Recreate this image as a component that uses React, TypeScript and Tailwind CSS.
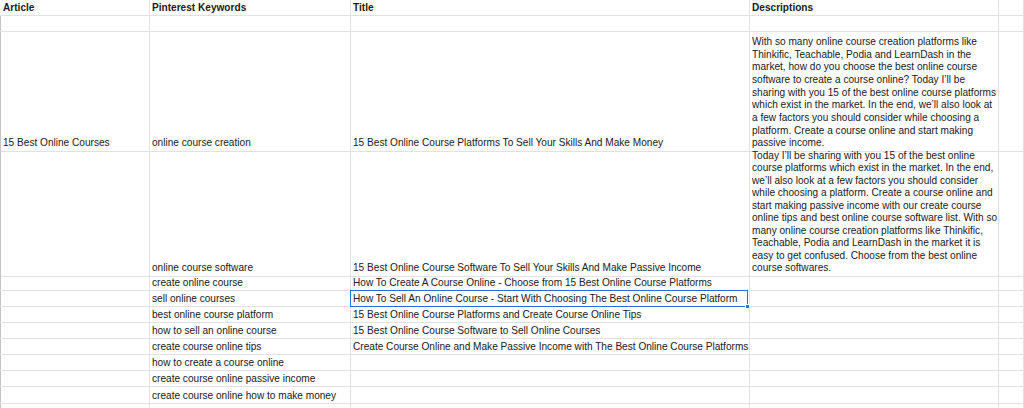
const DESC_ONE = [
  'With so many online course creation platforms like',
  'Thinkific, Teachable, Podia and LearnDash in the',
  'market, how do you choose the best online course',
  'software to create a course online? Today I’ll be',
  'sharing with you 15 of the best online course platforms',
  'which exist in the market. In the end, we’ll also look at',
  'a few factors you should consider while choosing a',
  'platform. Create a course online and start making',
  'passive income.',
];

const DESC_TWO = [
  'Today I’ll be sharing with you 15 of the best online',
  'course platforms which exist in the market. In the end,',
  'we’ll also look at a few factors you should consider',
  'while choosing a platform. Create a course online and',
  'start making passive income with our create course',
  'online tips and best online course software list. With so',
  'many online course creation platforms like Thinkific,',
  'Teachable, Podia and LearnDash in the market it is',
  'easy to get confused. Choose from the best online',
  'course softwares.',
];

type Row = {
  article?: string;
  keyword?: string;
  title?: string;
  desc?: string[];
  descClass?: string;
  height: string;
  selected?: boolean;
};

const ROWS: Row[] = [
  { height: 'h-[16px]' },
  {
    article: '15 Best Online Courses',
    keyword: 'online course creation',
    title: '15 Best Online Course Platforms To Sell Your Skills And Make Money',
    desc: DESC_ONE,
    descClass: 'pt-[4px] leading-[12.65px]',
    height: 'h-[115px]',
  },
  {
    keyword: 'online course software',
    title: '15 Best Online Course Software To Sell Your Skills And Make Passive Income',
    desc: DESC_TWO,
    descClass: 'pt-[3px] leading-[12.45px]',
    height: 'h-[128px]',
  },
  {
    keyword: 'create online course',
    title: 'How To Create A Course Online - Choose from 15 Best Online Course Platforms',
    height: 'h-[16px]',
  },
  {
    keyword: 'sell online courses',
    title: 'How To Sell An Online Course - Start With Choosing The Best Online Course Platform',
    height: 'h-[16px]',
    selected: true,
  },
  {
    keyword: 'best online course platform',
    title: '15 Best Online Course Platforms and Create Course Online Tips',
    height: 'h-[16px]',
  },
  {
    keyword: 'how to sell an online course',
    title: '15 Best Online Course Software to Sell Online Courses',
    height: 'h-[16px]',
  },
  {
    keyword: 'create course online tips',
    title: 'Create Course Online and Make Passive Income with The Best Online Course Platforms',
    height: 'h-[16px]',
  },
  { keyword: 'how to create a course online', height: 'h-[16px]' },
  { keyword: 'create course online passive income', height: 'h-[16px]' },
  { keyword: 'create course online how to make money', height: 'h-[17px]' },
  { height: 'h-[16px]' },
];

const cols = 'grid grid-cols-[150px_201px_399px_249px_1fr]';

function Cell({ children, className = '' }: { children?: React.ReactNode; className?: string }) {
  return (
    <div
      className={`relative flex items-end overflow-visible whitespace-nowrap border-b border-r border-[#e2e2e2] px-[2px] pb-[1px] ${className}`}
    >
      {children}
    </div>
  );
}

export default function App() {
  return (
    <div
      className="h-[408px] w-[1024px] overflow-hidden bg-white text-[10.1px] leading-[12.5px] text-[#202020]"
      style={{ fontFamily: '"Liberation Sans", Arial, sans-serif' }}
    >
      <div className={`${cols} h-[16px] font-bold`}>
        <Cell className="pl-[3px]">Article</Cell>
        <Cell>Pinterest Keywords</Cell>
        <Cell>Title</Cell>
        <Cell>Descriptions</Cell>
        <Cell />
      </div>

      {ROWS.map((row, i) => (
        <div key={i} className={`${cols} ${row.height}`}>
          <Cell className="pl-[3px] shadow-[inset_1px_0_0_#c4c4c4]">{row.article}</Cell>
          <Cell>{row.keyword}</Cell>
          <Cell>
            {row.title}
            {row.selected && (
              <>
                <div className="pointer-events-none absolute -left-px -top-px bottom-[-1px] right-[1px] border-[1.5px] border-[#1a73e8]" />
                <div className="absolute bottom-[-3px] right-[-1px] h-[5px] w-[5px] border border-white bg-[#1a73e8]" />
              </>
            )}
          </Cell>
          <Cell className="items-start">
            {row.desc && (
              <div className={row.descClass}>
                {row.desc.map((line) => (
                  <div key={line}>{line}</div>
                ))}
              </div>
            )}
          </Cell>
          <Cell />
        </div>
      ))}
    </div>
  );
}
